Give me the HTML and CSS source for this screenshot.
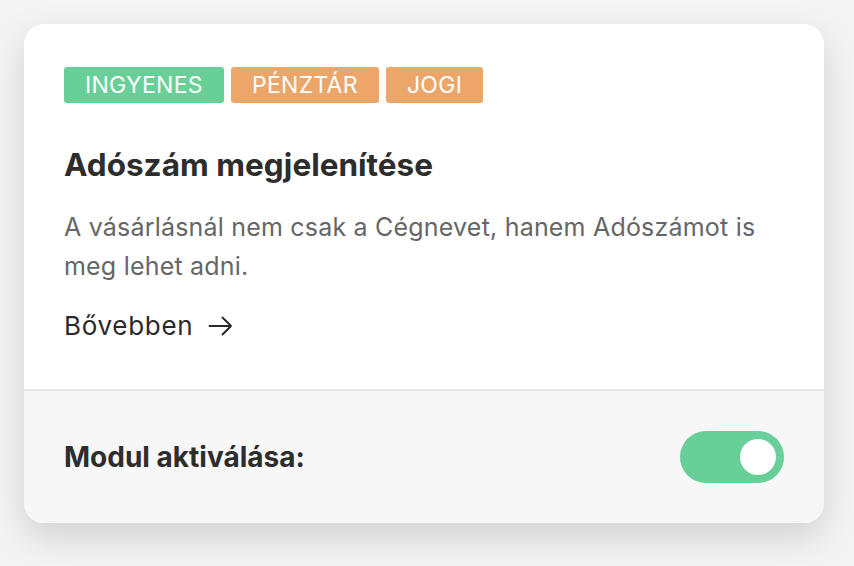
FILE: index.html
```html
<!DOCTYPE html>
<html lang="hu">
<head>
<meta charset="utf-8">
<link rel="stylesheet" href="styles.css">
</head>
<body>
<div class="card">
  <div class="card-body">
    <div class="tags">
      <span class="tag tag-green">INGYENES</span>
      <span class="tag tag-orange">PÉNZTÁR</span>
      <span class="tag tag-orange">JOGI</span>
    </div>
    <h2 class="title">Adószám megjelenítése</h2>
    <p class="desc">A vásárlásnál nem csak a Cégnevet, hanem Adószámot is meg lehet adni.</p>
    <a class="more" href="#"><span class="more-text">Bővebben</span> <svg class="arrow" width="25" height="20" viewBox="0 0 25 20"><path d="M1.5 10 H23 M14.5 1.5 L23 10 L14.5 18.5" fill="none" stroke="#2a2a2a" stroke-width="2" stroke-linecap="round" stroke-linejoin="round"/></svg></a>
  </div>
  <div class="card-footer">
    <span class="footer-label">Modul aktiválása:</span>
    <span class="toggle"><span class="knob"></span></span>
  </div>
</div>
</body>
</html>
```
FILE: styles.css
```css
html, body {
  margin: 0;
  padding: 0;
}
body {
  background: #f4f4f4;
  font-family: Inter, "Noto Sans", sans-serif;
  padding: 24px;
  height: 566px;
  box-sizing: border-box;
}
.card {
  width: 800px;
  background: #fff;
  border-radius: 20px;
  box-shadow: 0 14px 36px rgba(0, 0, 0, 0.15);
  overflow: hidden;
}
.card-body {
  padding: 43px 40px 47px;
  border-bottom: 2px solid #e6e6e6;
}
.tags {
  display: flex;
  gap: 7px;
}
.tag {
  color: #fff;
  font-size: 23px;
  line-height: 36px;
  height: 36px;
  padding: 0 21px;
  border-radius: 3px;
  letter-spacing: 0.3px;
}
.tag-green { background: #69cf99; }
.tag-orange { background: #eda66a; }
.title {
  margin: 42px 0 0;
  font-size: 31.5px;
  line-height: 40px;
  font-weight: 700;
  color: #2d2d2d;
}
.desc {
  margin: 23px 0 0;
  font-size: 25px;
  line-height: 39px;
  color: #666;
  letter-spacing: 0.2px;
}
.more {
  display: flex;
  align-items: center;
  gap: 15px;
  margin-top: 24px;
  font-size: 26px;
  line-height: 32px;
  color: #2a2a2a;
  text-decoration: none;
}
.more-text {
  letter-spacing: 0.7px;
}
.card-footer {
  background: #f7f7f7;
  height: 132px;
  padding: 0 40px;
  display: flex;
  align-items: center;
  justify-content: space-between;
}
.footer-label {
  font-size: 28px;
  font-weight: 700;
  color: #2d2d2d;
}
.toggle {
  width: 104px;
  height: 52px;
  border-radius: 26px;
  background: #69cf99;
  display: flex;
  align-items: center;
  justify-content: flex-end;
  padding: 0 8px;
  box-sizing: border-box;
}
.knob {
  width: 36px;
  height: 36px;
  border-radius: 50%;
  background: #fff;
}
```
